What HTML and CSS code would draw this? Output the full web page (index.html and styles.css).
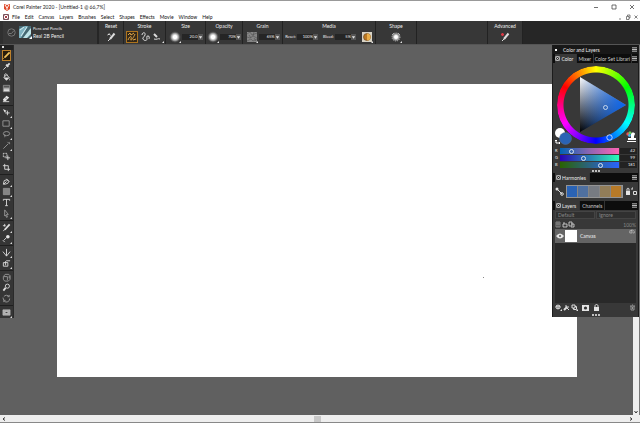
FILE: index.html
```html
<!DOCTYPE html>
<html lang="en">
<head>
<meta charset="utf-8">
<title>Corel Painter 2020</title>
<link rel="stylesheet" href="styles.css">
</head>
<body>
<svg class="defs" aria-hidden="true">
  <symbol id="menu" viewBox="0 0 6 6"><path d="M0 1h6M0 3h6M0 5h6"/></symbol>
  <symbol id="pin" viewBox="0 0 6 6"><rect x=".5" y=".5" width="5" height="5" rx="1"/><path d="M1.7 1.7l2.6 2.6M4.3 1.7L1.7 4.3"/></symbol>
  <symbol id="down" viewBox="0 0 6 6"><path class="solid" d="M1 2h4L3 5z"/></symbol>
  <symbol id="dab" viewBox="0 0 12 12"><circle cx="6" cy="6" r="5" fill="url(#soft)" stroke="#555" stroke-width=".7"/><path class="solid" d="M12 10v2h-2z"/></symbol>
  <radialGradient id="soft"><stop offset=".35" stop-color="#fff"/><stop offset="1" stop-color="#555"/></radialGradient>
</svg>
<div class="window">
  <header class="titlebar">
    <svg class="logo" viewBox="0 0 8 8"><path d="M1 1l3 1 3-1v5L4 8 1 6z" fill="#e0492a"/><path d="M2 2l2 3 2-3M4 5v2" fill="none" stroke="#fff"/></svg>
    <h1>Corel Painter 2020 - [Untitled-1 @ 66,7%]</h1>
    <div class="winbuttons">
      <button aria-label="Minimize"><svg viewBox="0 0 6 6"><path d="M1 3.5h4"/></svg></button>
      <button aria-label="Maximize"><svg viewBox="0 0 6 6"><path d="M1 1h4v4H1z"/></svg></button>
      <button aria-label="Close"><svg viewBox="0 0 6 6"><path d="M1 1l4 4M5 1L1 5"/></svg></button>
    </div>
  </header>
  <nav class="menubar">
    <svg class="docicon" viewBox="0 0 6 6"><path d="M.5.5h5v5h-5z" fill="#fff" stroke="#76505a"/><path d="M1.5 1.5l3 3M4.5 1.5l-3 3" stroke="#a33e48"/></svg>
    <a href="#">File</a><a href="#">Edit</a><a href="#">Canvas</a><a href="#">Layers</a><a href="#">Brushes</a><a href="#">Select</a><a href="#">Shapes</a><a href="#">Effects</a><a href="#">Movie</a><a href="#">Window</a><a href="#">Help</a>
    <div class="docbuttons">
      <button aria-label="Minimize document"><svg viewBox="0 0 6 6"><path d="M2 5h2"/></svg></button>
      <button aria-label="Restore document"><svg viewBox="0 0 6 6"><path d="M1.5 2.5h2.5v3H1.500zM2.500 2V1H5v3H4"/></svg></button>
      <button aria-label="Close document"><svg viewBox="0 0 6 6"><path d="M1.500 1.500l3 3M4.500 1.500l-3 3"/></svg></button>
    </div>
  </nav>
  <section class="propbar">
    <div class="brush">
      <svg class="recent" viewBox="0 0 9 9"><circle cx="4.500" cy="4.500" r="3.700"/><path d="M2 5.500h2.500L7 2.500"/></svg>
      <button class="brushbtn" aria-label="Brush selector"><svg viewBox="0 0 13 13"><path d="M0 0h12v12H0z" fill="#456872"/><path d="M0 3l6-3h3L2 12H0z" fill="#7fb2c0"/><path d="M12 2L4 12h4l4-4z" fill="#bfe4e8"/><path d="M8 1L2 10M1 4l4-3" stroke="#d9eef2"/><path d="M13 10v3h-3z" fill="#fff"/></svg></button>
      <div class="brushname"><small>Pens and Pencils</small><strong>Real 2B Pencil</strong></div>
    </div>
    <div class="group reset"><h2>Reset</h2><div class="row"><button aria-label="Reset tool"><svg viewBox="0 0 12 12"><path class="thick" d="M9.500 2.500L5 8"/><path d="M2.500 4l2-1M4 2.500l1.500 2M3 10l2-2"/></svg></button></div></div>
    <div class="group stroke"><h2>Stroke</h2><div class="row">
      <button class="active" aria-label="Freehand strokes"><svg viewBox="0 0 10 10"><path d="M1 3l2-2 1 2 3-2M1 8c2-5 4-4 3-1s2 0 4-5M6 8l3-1"/></svg></button>
      <button aria-label="Straight line strokes"><svg viewBox="0 0 12 12"><path d="M3 4c0-3 4-3 3 0S3 6 4 8s4 2 4 0-1-3 1-3 1 2 1 3"/></svg></button>
      <button aria-label="Align to path"><svg viewBox="0 0 12 12"><path class="thick" d="M2 3l3 3"/><path d="M2 8c3 1 4-1 6 0"/><path class="solid" d="M12 10v2h-2z"/></svg></button></div></div>
    <div class="group size"><h2>Size</h2><div class="row"><button aria-label="Brush size"><svg viewBox="0 0 12 12"><use href="#dab"/></svg></button><label class="field"><input aria-label="Size" value="20.0"><svg viewBox="0 0 6 6"><use href="#down"/></svg></label></div></div>
    <div class="group opacity"><h2>Opacity</h2><div class="row"><button aria-label="Brush opacity"><svg viewBox="0 0 12 12"><use href="#dab"/></svg></button><label class="field"><input aria-label="Opacity" value="70%"><svg viewBox="0 0 6 6"><use href="#down"/></svg></label></div></div>
    <div class="group grain"><h2>Grain</h2><div class="row"><button aria-label="Paper texture"><svg viewBox="0 0 12 12"><path d="M1 1h10v10H1z" fill="#858585" stroke="none"/><path d="M1 3l3-2 2 3 5-2M1 6l3 1 3-2 4 2M1 10l4-2 2 2 4-2M3 4l2 3M8 1l-1 4M8 7l2 3" stroke="#505050" stroke-width=".6"/><path class="solid" d="M12 10v2h-2z"/></svg></button><label class="field"><input aria-label="Grain" value="65%"><svg viewBox="0 0 6 6"><use href="#down"/></svg></label></div></div>
    <div class="group media"><h2>Media</h2><div class="row"><label class="field"><span>Reset:</span><input value="100%"><svg viewBox="0 0 6 6"><use href="#down"/></svg></label><label class="field"><span>Bleed:</span><input value="5%"><svg viewBox="0 0 6 6"><use href="#down"/></svg></label><button aria-label="Media"><svg viewBox="0 0 12 12"><path d="M1 1h10v10H1z" fill="#d9d3c5" stroke="none"/><circle cx="6" cy="6" r="3.500" fill="#bc7822" stroke="#624120" stroke-width=".6"/><path d="M6 2.500v7a3.500 3.500 0 0 0 0-7" fill="#eaad47" stroke="none"/><path class="solid" d="M12 10v2h-2z"/></svg></button></div></div>
    <div class="group shape"><h2>Shape</h2><div class="row"><button aria-label="Dab shape"><svg viewBox="0 0 12 12"><circle cx="6" cy="6" r="4" fill="url(#soft)" stroke="#bbb" stroke-width="1" stroke-dasharray="1 1"/><path d="M2 4l2-2M8 2l2 2" stroke-width=".6"/><path class="solid" d="M12 10v2h-2z"/></svg></button></div></div>
    <div class="group blank"></div>
    <div class="group advanced"><h2>Advanced</h2><div class="row"><button aria-label="Advanced brush controls"><svg viewBox="0 0 12 12"><path class="thick" d="M9.500 2.500L5 8"/><path d="M3 10l2-2"/><path d="M2 3.500h3M3.500 2v3" stroke="#dc3945" stroke-width="1.500"/></svg></button></div></div>
  </section>
  <main class="workspace">
    <aside class="toolbox">
      <div class="grip"></div>
      <button class="active" aria-label="Brush"><svg viewBox="0 0 10 10"><path class="thick" d="M8.500 1.500L3 7"/><path d="M3 7L1.500 8.500"/></svg></button>
      <button aria-label="Dropper"><svg viewBox="0 0 10 10"><path class="thick" d="M8.500 1.500L6 4M4.500 3L7 5.500"/><path d="M5 5L1.500 8.500"/></svg></button>
      <button aria-label="Paint bucket"><svg viewBox="0 0 10 10"><path d="M2 5l3-3 3 3-3 3zM3 4V2c0-2 3-1 3 1"/><path class="solid" d="M2 5h6L5 8zM9 5v3H8z"/></svg></button>
      <button aria-label="Gradient"><svg viewBox="0 0 10 10"><path d="M1.500 1.500h7v7h-7z" fill="#aaa" stroke="#888"/><path d="M2 2h6v2H2z" fill="#555" stroke="none"/><path d="M2 6h6v2H2z" fill="#ddd" stroke="none"/></svg></button>
      <button aria-label="Eraser"><svg viewBox="0 0 10 10"><path class="solid" d="M1 6l4-4 3 2-4 4H2z"/><path d="M1 8.500h7"/><path d="M3 4l3 2" stroke="#444" stroke-width=".5"/></svg></button>
      <hr>
      <button class="more" aria-label="Layer adjuster"><svg viewBox="0 0 10 10"><path class="solid" d="M1 1l4 2-2 2z"/><path d="M6 3v5M3.500 5.500h5"/></svg></button>
      <button class="more dim" aria-label="Rectangular selection"><svg viewBox="0 0 10 10"><path d="M1 2h7v6H1z"/></svg></button>
      <button class="more dim" aria-label="Lasso"><svg viewBox="0 0 10 10"><ellipse cx="5" cy="4" rx="3.500" ry="2.300"/><path d="M3 5c-1 1 1 1 0 3"/></svg></button>
      <button class="more dim" aria-label="Magic wand"><svg viewBox="0 0 10 10"><path d="M1.500 8.500L7 3M8 1v2M8 3h1M6 1l1 1"/></svg></button>
      <button aria-label="Selection adjuster"><svg viewBox="0 0 10 10"><path stroke-dasharray="1 .5" d="M1.500 1.500h4v4h-4z"/><path d="M6.500 4v5M4 6.500h5"/></svg></button>
      <button aria-label="Crop"><svg viewBox="0 0 10 10"><path d="M3 1v6h6M1 3h6v6"/></svg></button>
      <hr>
      <button class="more" aria-label="Pen"><svg viewBox="0 0 10 10"><path d="M1.500 8l1-4 3-1 2 2-1 2-3 1zM2 8l3-3M5 2l3 3"/></svg></button>
      <button class="more" aria-label="Rectangular shape"><svg viewBox="0 0 10 10"><path d="M1.500 1.500h7v7h-7z" fill="#858585" stroke="#aaa" stroke-width=".6"/></svg></button>
      <button aria-label="Text"><svg viewBox="0 0 10 10"><path d="M1.500 3V1.500h7V3M5 1.500v7M3.500 8.500h3"/></svg></button>
      <button class="more dim" aria-label="Shape selection"><svg viewBox="0 0 10 10"><path d="M3 1l4 5H5l1 3-1 .3-1-2.500-1 1z"/></svg></button>
      <hr>
      <button class="more" aria-label="Cloner"><svg viewBox="0 0 10 10"><path class="thick" d="M8.500 1.500L3 7.500"/><path d="M1 3h3M3 1v3M1.500 9L3 7"/></svg></button>
      <button class="more" aria-label="Rubber stamp"><svg viewBox="0 0 10 10"><circle class="solid" cx="6.500" cy="3" r="2"/><path d="M5 4L2 7M1 7l2 2"/></svg></button>
      <hr>
      <button class="more" aria-label="Mirror painting"><svg viewBox="0 0 10 10"><path d="M5 1v8M1 4l4 5M9 4L5 9"/></svg></button>
      <button class="more" aria-label="Perspective guides"><svg viewBox="0 0 10 10"><path d="M1.500 4h5v4h-5zM3 4l2-2h4M4 3v4"/></svg></button>
      <hr>
      <button class="dim" aria-label="Grabber"><svg viewBox="0 0 10 10"><path d="M1.500 4l2-2.500h4L9 3v4L7 9H3L1.500 7zM2 4h4v4M8 3v3"/></svg></button>
      <button aria-label="Magnifier"><svg viewBox="0 0 10 10"><circle cx="6" cy="3.500" r="2.300"/><path class="thick" d="M4 5.500L1.500 8.500"/></svg></button>
      <button class="dim" aria-label="Rotate page"><svg viewBox="0 0 10 10"><path d="M2 3a3.600 3.600 0 0 1 6 0M8.500 5a3.600 3.600 0 0 1-6 3M2 7L1 4M8 1v2H6M2 9V7h2"/></svg></button>
      <hr>
      <button class="more" aria-label="Screen mode"><svg viewBox="0 0 10 10"><path d="M1 2h8v6H1z" fill="#aaa" stroke="#ccc" stroke-width=".6"/><path d="M3.500 4h3v2h-3z" fill="#333" stroke="#eee" stroke-width=".6"/></svg></button>
    </aside>
    <div class="viewport"><div class="canvas"><i class="speck"></i></div></div>
    <div class="vscroll"><svg viewBox="0 0 6 6"><path d="M1.500 2l1.500 2 1.500-2"/></svg></div>
    <section class="palette">
      <header><i class="dot"></i><h2>Color and Layers</h2><button aria-label="Palette menu"><svg viewBox="0 0 6 6"><use href="#menu"/></svg></button></header>
      <div class="tabs"><button class="on"><svg viewBox="0 0 6 6"><use href="#pin"/></svg>Color</button><button>Mixer</button><button>Color Set Librari</button><button class="menu" aria-label="Color menu"><svg viewBox="0 0 6 6"><use href="#menu"/></svg></button></div>
      <div class="color">
        <div class="wheel">
          <div class="ring"></div>
          <svg viewBox="0 0 78 78">
            <defs><linearGradient id="shade" x1="0" y1="0" x2="0" y2="1"><stop offset="0" stop-color="#fff"/><stop offset=".5" stop-color="#747a85"/><stop offset="1" stop-color="#000"/></linearGradient>
            <linearGradient id="hue"><stop offset="0" stop-color="#0864ef" stop-opacity="0"/><stop offset="1" stop-color="#0864ef"/></linearGradient></defs>
            <path d="M23 11L69 39 23 66z" fill="url(#shade)"/><path d="M23 11L69 39 23 66z" fill="url(#hue)"/>
            <g fill="none" stroke="#e4edf8" stroke-width=".8"><circle cx="48.500" cy="41.500" r="2"/><circle cx="52.500" cy="71.500" r="2.700"/></g>
          </svg>
        </div>
        <svg class="swatches" viewBox="0 0 18 18"><circle cx="6" cy="6" r="5" fill="#fff"/><circle cx="11.500" cy="11.500" r="6" fill="#2a63b5" stroke="#536c91" stroke-width=".6"/><path d="M2 13v3h4M1 14l1-1 1 1M5 15l1 1-1 1" fill="none" stroke="#fff"/></svg>
        <svg class="clonecolor" viewBox="0 0 10 12"><path d="M5 3c0-2 4-2 4 0L8 5v2h2v2H2V7h3V5zM1 10h9v1H1z" fill="#fff"/><circle cx="2" cy="3" r="1.700" fill="#e9515a"/><circle cx="4" cy="1.700" r="1.500" fill="#65c959"/><circle cx="3.500" cy="4.500" r="1.400" fill="#41b9ee"/></svg>
      </div>
      <div class="sliders">
        <label for="r">R</label><input class="red" id="r" type="range" max="255" value="42"><output for="r">42</output>
        <label for="g">G</label><input class="green" id="g" type="range" max="255" value="99"><output for="g">99</output>
        <label for="b">B</label><input class="blue" id="b" type="range" max="255" value="181"><output for="b">181</output>
      </div>
      <div class="dots"><i></i><i></i><i></i></div>
      <div class="tabs"><button class="on"><svg viewBox="0 0 6 6"><use href="#pin"/></svg>Harmonies</button><button class="menu" aria-label="Harmonies menu"><svg viewBox="0 0 6 6"><use href="#menu"/></svg></button></div>
      <div class="harmony">
        <svg viewBox="0 0 9 9"><path d="M1.500 1.500L7 7"/><circle class="solid" cx="2" cy="2" r="1.500"/><circle cx="7" cy="7" r="1.300"/></svg>
        <div class="chips"><i class="c1"></i><i class="c2"></i><i class="c3"></i><i class="c4"></i><i class="c5"></i></div>
        <svg class="wide" viewBox="0 0 12 9"><path class="solid" d="M1 4h4v4H1z"/><path d="M2 4V2c0-1 2-1 2 0v2M8.500 4.500h3v3h-3zM7 3V1h1"/></svg>
      </div>
      <div class="tabs"><button class="on"><svg viewBox="0 0 6 6"><use href="#pin"/></svg>Layers</button><button>Channels</button><button class="menu" aria-label="Layers menu"><svg viewBox="0 0 6 6"><use href="#menu"/></svg></button></div>
      <div class="modes"><select aria-label="Composite method"><option>Default</option></select><select aria-label="Composite depth"><option>Ignore</option></select></div>
      <div class="options"><svg viewBox="0 0 20 7"><g class="dimline"><path d="M1 1h4v5H1zM1 3h4M3 1v5"/></g><path d="M8 3h4v3H8zM9 3V1M14 1h3v4h-3zM16 3h3v3h-3"/></svg><span>100%</span></div>
      <div class="layers">
        <div class="layer"><svg viewBox="0 0 8 6"><path class="solid" d="M0 3q4-5 8 0-4 5-8 0"/><circle cx="4" cy="3" r="1" fill="#555" stroke="none"/></svg><i class="thumb"></i><span>Canvas</span><svg class="badge" viewBox="0 0 8 6"><path d="M1 2h3v3H1zM3 2V1h2l2 2v2H5"/></svg></div>
      </div>
      <footer>
        <button aria-label="Layer commands"><svg viewBox="0 0 7 7"><path d="M1 2l2-1 2 1v2L3 5 1 4zM1 2l2 1 2-1M3 3v2"/><path class="solid" d="M7 5v2H5z"/></svg></button>
        <button aria-label="Dynamic plug-ins"><svg viewBox="0 0 7 7"><path class="thick" d="M1 6l3-3"/><path d="M3 1v2h3M4 4l2 2"/></svg></button>
        <button aria-label="New layer"><svg viewBox="0 0 7 7"><path d="M1 1h3v3H1zM2.500 4v1.500h3v-3H4"/><path class="solid" d="M7 5v2H5z"/></svg></button>
        <button class="mask" aria-label="Layer mask"><svg viewBox="0 0 7 7"><path class="solid" d="M0 1h7v6H0z"/><circle cx="3.500" cy="4" r="1.600" fill="#333" stroke="none"/></svg></button>
        <button class="lock" aria-label="Lock layer"><svg viewBox="0 0 7 7"><path class="solid" d="M1 3h5v4H1z"/><path d="M2 3V2c0-2 3-2 3 0v1"/></svg></button>
        <button class="trash dim" aria-label="Delete"><svg viewBox="0 0 7 7"><path d="M1 2h5M3 1h1M2 2v4h3V2M3.500 3v2"/></svg></button>
      </footer>
      <div class="dots"><i></i><i></i><i></i></div>
    </section>
  </main>
  <div class="hscroll"><svg viewBox="0 0 6 6"><path d="M4 1.500L2 3l2 1.500"/></svg><i class="handle"></i><svg viewBox="0 0 6 6"><path d="M2 1.500L4 3 2 4.500"/></svg></div>
</div>
</body>
</html>
```

FILE: styles.css
```css
* { box-sizing: border-box; }
body { margin: 0; font: 5px/8px Lato, "Liberation Sans", sans-serif; color: #eee; }
h1, h2 { margin: 0; font: inherit; }
i { display: block; }
button, input, select { margin: 0; padding: 0; border: 0; background: none; color: inherit; font: inherit; min-width: 0; }
button { display: flex; align-items: center; justify-content: center; }
svg { display: block; flex: none; fill: none; stroke: #ddd; stroke-width: 1; }
.solid { fill: #e4e4e4; stroke: none; }
.thick { stroke-width: 2; }
.dim svg, .dimline { stroke: #999; }
.defs { position: absolute; width: 0; height: 0; }

.window { display: flex; flex-direction: column; height: 100vh; border-top: 1px solid #999; background: #fff; }
.titlebar { display: flex; align-items: center; height: 12px; padding: 0 5px 0 3px; color: #222; }
.logo { width: 8px; height: 8px; margin-right: 2px; stroke: none; }
.titlebar h1 { white-space: nowrap; }
.winbuttons, .docbuttons { display: flex; margin-left: auto; }
.winbuttons { gap: 12px; }
.winbuttons svg, .docbuttons svg { width: 6px; height: 6px; stroke: #333; }
.winbuttons svg { stroke-width: .7; }
.docbuttons { gap: 2px; }
.docbuttons svg { stroke-width: .6; }
.menubar { display: flex; align-items: center; gap: 5px; height: 8px; padding: 0 1px 0 3px; }
.menubar a { color: #111; text-decoration: none; }
.docicon { width: 6px; height: 6px; margin-right: -2px; }

.propbar { display: flex; height: 24px; background: #262626; border-bottom: 1px solid #555; }
.brush { display: flex; align-items: center; width: 99px; padding-left: 4px; background: #373737; border-right: 2px solid #262626; border-left: 3px solid #303030; }
.recent { width: 9px; height: 9px; stroke: #777; margin-right: 3px; }
.brushbtn svg { width: 13px; height: 13px; stroke: none; }
.brushname { margin-left: 1px; white-space: nowrap; }
.brushname small, .brushname strong { display: block; font-weight: 400; }
.brushname small { font-size: 4px; line-height: 7px; }
.brushname strong { font-size: 5px; }
.group { background: #373737; border-right: 1px solid #222; text-align: center; }
.group h2 { height: 10px; line-height: 10px; }
.row { display: flex; align-items: center; justify-content: center; height: 12px; gap: 1px; }
.row button { height: 12px; }
.row button svg { width: 12px; height: 12px; }
.reset { width: 25px; }
.stroke { width: 42px; }
.size { width: 40px; }
.opacity { width: 37px; }
.grain { width: 40px; }
.media { width: 93px; }
.media .row { gap: 5px; }
.shape { width: 41px; }
.blank { width: 71px; }
.advanced { width: 35px; }
.row .active { border: 1px solid #ae741d; background: #322718; }
.row .active svg { width: 10px; height: 10px; stroke: #e1a749; }
.field { display: flex; align-items: center; font-size: 4px; }
.field input { width: 16px; height: 6px; background: #252525; text-align: right; }
.field span { margin-right: 1px; }
.field svg { width: 5px; height: 6px; background: #555; }

.workspace { position: relative; display: flex; flex: 1; min-height: 0; background: #606060; }
.toolbox { display: flex; flex-direction: column; align-self: flex-start; width: 14px; min-height: 273px; background: #353535; border-right: 1px solid #2a2a2a; }
.grip { height: 5px; background: #222; }
.grip::before { content: ""; display: block; width: 2px; height: 2px; margin: 1px 0 0 2px; background: #ddd; }
.toolbox button { position: relative; flex: 1; min-height: 10px; }
.toolbox button svg { width: 9px; height: 9px; }
.toolbox .active { margin: 0 2px; background: #271d0d; outline: 1px solid #bd812b; outline-offset: -1px; }
.toolbox .active svg { stroke: #f2c35d; }
.toolbox hr { width: 100%; height: 3px; margin: 0; border: solid #353535; border-width: 1px 0; background: #1f1f1f; }
.more::after { content: ""; position: absolute; right: 1px; bottom: 0; border: 1px solid #ddd; border-top-color: transparent; border-left-color: transparent; }
.viewport { display: flex; flex: 1; padding: 39px 56px 38px 43px; }
.canvas { position: relative; flex: 1; background: #fff; }
.speck { position: absolute; left: 82%; top: 66%; width: 1px; height: 1px; background: #888; }
.vscroll { display: flex; align-items: flex-end; width: 7px; background: #eee; border-right: 1px solid #777; }
.vscroll svg, .hscroll svg { width: 6px; height: 6px; stroke: #333; }
.hscroll { display: flex; align-items: center; justify-content: space-between; height: 8px; padding: 0 6px 0 1px; background: #eee; border-bottom: 1px solid #888; }
.handle { width: 7px; height: 6px; background: #c8c8c8; }

.palette { position: absolute; top: 0; right: 1px; width: 87px; background: #383838; border: solid #1c1c1c; border-width: 0 1px; }
.palette header { display: flex; align-items: center; height: 9px; padding: 0 1px; background: #181818; }
.dot { width: 2px; height: 2px; margin: 0 6px 0 1px; background: #fff; }
.palette header button { margin-left: auto; }
.palette header svg, .tabs svg { width: 5px; height: 5px; }
.tabs { display: flex; height: 9px; padding: 0 1px 0 2px; background: #0d0d0d; }
.tabs button { padding: 0 2px; white-space: nowrap; border-right: 1px solid #333; color: #ccc; }
.tabs .on { gap: 1px; padding: 0 3px 0 1px; background: #383838; color: #eee; }
.tabs .menu { margin-left: auto; padding: 0; border: 0; flex: none; }
.color { position: relative; padding: 3px 4px 4px; }
.wheel { position: relative; width: 78px; height: 78px; }
.wheel svg { position: absolute; inset: 0; width: 78px; height: 78px; stroke: none; }
.ring { height: 78px; border-radius: 50%; background: conic-gradient(from 300deg, red, yellow, lime, cyan, blue, magenta, red); mask: radial-gradient(circle, transparent 32px, #000 33px); }
.swatches, .clonecolor { position: absolute; stroke: none; }
.swatches { left: 1px; bottom: 3px; width: 18px; height: 18px; }
.clonecolor { right: 2px; bottom: 5px; width: 10px; height: 12px; }
.sliders { display: grid; grid-template-columns: 4px 1fr 17px; row-gap: 1px; column-gap: 1px; padding: 0 1px 0 2px; font-size: 4px; line-height: 6px; }
.sliders output { background: #222; text-align: right; padding-right: 2px; }
.sliders input { appearance: none; width: 100%; height: 6px; }
.red { background: linear-gradient(90deg, #0063b5, #8d65b3, #ff63b5); }
.green { background: linear-gradient(90deg, #2a00b5, #2a80b5, #2affb5); }
.blue { background: linear-gradient(90deg, #2a6300, #2a6380, #2a63ff); }
.sliders input::-webkit-slider-thumb { appearance: none; width: 5px; height: 5px; border: 1px solid #dbe5ef; border-radius: 50%; background: transparent; }
.dots { display: flex; justify-content: center; align-items: center; gap: 1px; height: 5px; }
.dots i { width: 2px; height: 2px; border-radius: 50%; background: #eee; }
.harmony { display: flex; align-items: center; justify-content: space-between; height: 19px; padding: 0 1px 0 2px; }
.harmony svg { width: 9px; height: 9px; }
.harmony .wide { width: 12px; }
.chips { display: flex; width: 57px; height: 13px; border: 1px solid #949494; }
.chips i { flex: 1; border-right: 1px solid #858585; }
.c1 { background: #2a63b5; }
.c2 { background: #4f70a0; }
.c3 { background: #777b82; }
.c4 { background: #927d58; }
.c5 { background: #b77a28; }
.modes { display: flex; gap: 1px; height: 10px; padding: 1px 2px; }
.modes select { flex: 1; appearance: none; padding-left: 2px; background: #303030; color: #888; border: 1px solid #444; line-height: 6px; }
.options { display: flex; align-items: center; justify-content: space-between; height: 9px; padding: 0 2px; color: #888; }
.options svg { width: 20px; height: 7px; stroke-width: .8; }
.layers { min-height: 74px; margin: 0 2px; background: #292929; }
.layer { position: relative; display: flex; align-items: center; gap: 1px; height: 14px; padding-left: 1px; background: #646464; }
.layer svg { width: 8px; height: 6px; }
.layer .badge { position: absolute; right: 1px; top: 0; width: 6px; height: 5px; stroke-width: .7; }
.thumb { width: 12px; height: 12px; background: #fff; }
.layer span { margin-left: 2px; }
.palette footer { display: flex; align-items: center; height: 9px; padding: 0 2px; gap: 1px; }
.palette footer svg { width: 7px; height: 7px; }
.mask { margin-left: 3px; }
.lock { margin-left: 3px; }
.trash { margin-left: auto; }
```
